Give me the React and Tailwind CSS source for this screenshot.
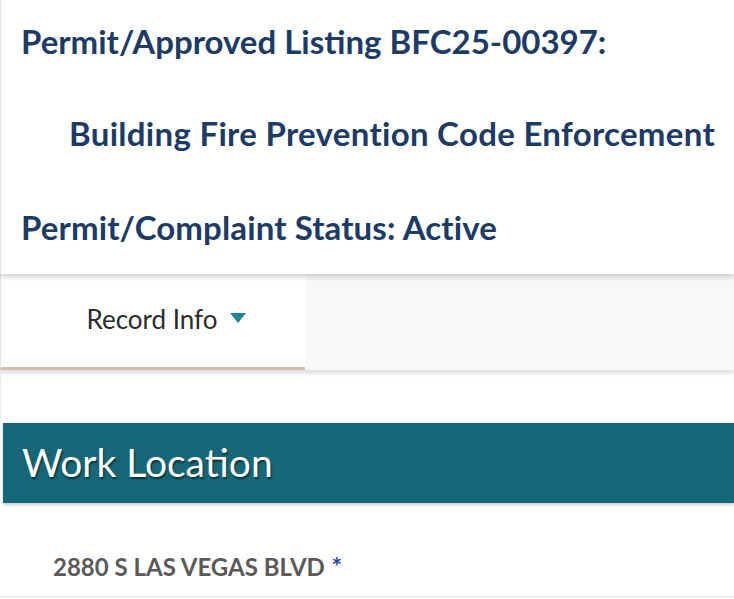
import React from "react";

export default function App() {
  return (
    <div className="w-[734px] h-[599px] overflow-hidden bg-white font-['Lato','Open_Sans',sans-serif]">
      <div className="relative z-20 h-[274px] bg-white border-l border-[#e3e3e3] shadow-[0_3px_5px_rgba(0,0,0,0.18)] text-[#1c3b66] font-bold">
        <div className="pt-[21px] pl-[20px] text-[33px] leading-[40px] whitespace-nowrap">Permit/Approved Listing BFC25-00397:</div>
        <div className="pt-[52px] pl-[68px] text-[33px] leading-[40px] tracking-[0.3px] whitespace-nowrap">Building Fire Prevention Code Enforcement</div>
        <div className="pt-[54px] pl-[20px] text-[33px] leading-[40px] tracking-[0.12px] whitespace-nowrap">Permit/Complaint Status: Active</div>
      </div>
      <div className="relative z-10 flex h-[96px] bg-[#f8f8f8] shadow-[0_3px_5px_rgba(0,0,0,0.15)]">
        <div className="flex w-[305px] items-center justify-center gap-[12px] bg-white border-b-[3px] border-[#cdc1b4] border-l border-l-[#e3e3e3] pb-[2px] pl-[26px]">
          <span className="text-[26px] text-[#2b2b2b]">Record Info</span>
          <svg width="16" height="10" viewBox="0 0 16 10" className="mt-[-3px]">
            <polygon points="0,0 16,0 8,10" fill="#1f8598" />
          </svg>
        </div>
      </div>
      <div className="h-[53px] border-l border-[#eeeeee]"></div>
      <div className="ml-[3px] flex h-[80px] items-center bg-[#166878] pl-[19px] shadow-[0_2px_3px_rgba(0,0,0,0.2)]">
        <span className="text-[39px] leading-[46px] text-white [text-shadow:1px_2px_2px_rgba(0,0,0,0.55)] pb-[2px]">Work Location</span>
      </div>
      <div className="h-[94px] pt-[49px] pl-[53px] border-b border-[#e6e6e6] flex items-start">
        <span className="text-[24px] leading-[30px] font-bold text-[#5a5a5a]">2880 S LAS VEGAS BLVD</span>
        <span className="ml-[7px] text-[24px] leading-[30px] font-bold text-[#2a3fa8]">*</span>
      </div>
    </div>
  );
}
